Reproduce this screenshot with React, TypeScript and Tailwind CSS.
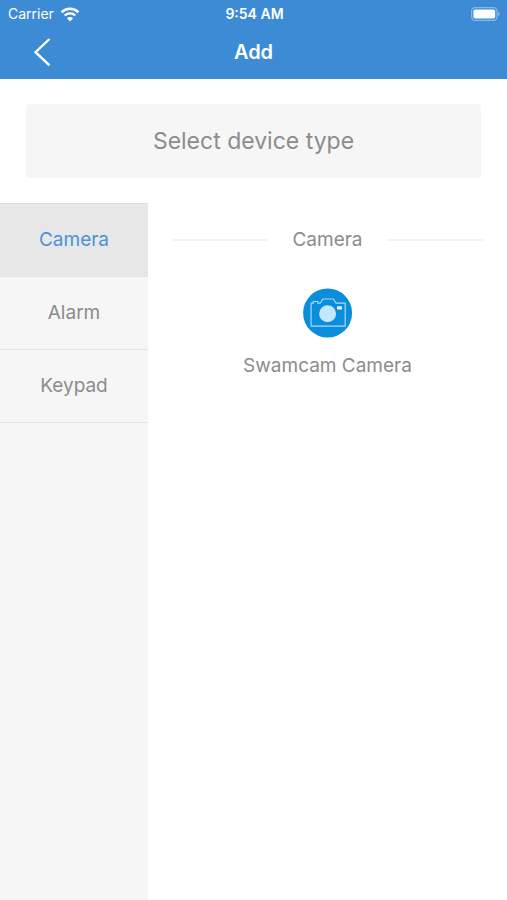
import { useState } from 'react'

interface Device {
  name: string
}

interface Category {
  label: string
  devices: Device[]
}

const categories: Category[] = [
  { label: 'Camera', devices: [{ name: 'Swamcam Camera' }] },
  { label: 'Alarm', devices: [] },
  { label: 'Keypad', devices: [] },
]

function WifiIcon() {
  return (
    <svg width="20" height="15" viewBox="0 0 20 15" fill="none" aria-hidden="true">
      <path d="M1.6 5.2a12 12 0 0 1 16.8 0" stroke="white" strokeWidth="2.7" />
      <path d="M4.7 8.5a7.6 7.6 0 0 1 10.6 0" stroke="white" strokeWidth="2.4" />
      <path d="M10 14.4 6.9 11.3a4.4 4.4 0 0 1 6.2 0z" fill="white" />
    </svg>
  )
}

function BatteryIcon() {
  return (
    <svg width="30" height="14" viewBox="0 0 30 14" fill="none" aria-hidden="true">
      <rect x="0.6" y="0.6" width="25.4" height="12.8" rx="3.6" stroke="white" strokeOpacity="0.4" strokeWidth="1.2" />
      <rect x="2.4" y="2.4" width="21.8" height="9.2" rx="1.8" fill="white" />
      <path d="M27.2 4.8c1.8.7 1.8 3.7 0 4.4z" fill="white" fillOpacity="0.5" />
    </svg>
  )
}

function CameraIcon() {
  return (
    <svg width="50" height="50" viewBox="0 0 50 50" fill="none" aria-hidden="true">
      <circle cx="24.6" cy="25" r="24.5" fill="#0a8ddb" />
      <path
        d="M8.1 15.2h2.1v-1.7h4.6v1.7h2.4l2.6-4.2h10.6l2.6 4.2h9.2v22.9H8.1z"
        stroke="#a9daf8"
        strokeWidth="1.2"
        strokeLinejoin="round"
      />
      <circle cx="24.6" cy="25.8" r="8.5" fill="#c3e7fc" />
      <rect x="34" y="18.2" width="5" height="3.2" rx="0.4" fill="#e6f6ff" />
    </svg>
  )
}

function StatusBar() {
  return (
    <div className="grid h-7 grid-cols-3 items-center pl-2 pr-1.5 text-white">
      <div className="flex items-center gap-1.5 text-sm">
        <span>Carrier</span>
        <WifiIcon />
      </div>
      <span className="text-center text-sm font-semibold">9:54 AM</span>
      <div className="flex justify-end">
        <BatteryIcon />
      </div>
    </div>
  )
}

export default function App() {
  const [selected, setSelected] = useState(0)
  const active = categories[selected]

  return (
    <div className="flex min-h-screen flex-col bg-white font-['Inter','Liberation_Sans',sans-serif] text-[#8c8c8c]">
      <header className="bg-[#3d8bd5]">
        <StatusBar />
        <div className="grid h-[51px] grid-cols-3 items-center pb-1 text-white">
          <button type="button" aria-label="Back" className="ml-8 w-5">
            <svg width="20" height="30" viewBox="0 0 20 30" fill="none" aria-hidden="true">
              <path d="M17.5 2 3.5 15.2l14 13.2" stroke="white" strokeWidth="2.4" />
            </svg>
          </button>
          <h1 className="text-center text-xl font-semibold">Add</h1>
        </div>
      </header>

      <div className="px-[26px] py-[25px]">
        <h2 className="rounded-sm bg-[#f6f6f6] py-5 text-center text-[23px] leading-[34px]">
          Select device type
        </h2>
      </div>

      <div className="flex flex-1">
        <nav className="w-[148px] shrink-0 border-t border-[#dedede] bg-[#f6f6f6]">
          {categories.map((category, i) => (
            <button
              key={category.label}
              type="button"
              aria-pressed={i === selected}
              onClick={() => setSelected(i)}
              className={`block w-full border-b border-[#e3e3e3] py-6 text-[19px] leading-6 ${
                i === selected ? 'bg-[#e7e7e7] text-[#4a92d8]' : ''
              }`}
            >
              {category.label}
            </button>
          ))}
        </nav>

        <main className="flex-1 px-6 pt-[25px]">
          <div className="flex items-center gap-6">
            <div className="h-0.5 flex-1 bg-[#f3f3f3]" />
            <h3 className="text-[19px] leading-6">{active.label}</h3>
            <div className="h-0.5 flex-1 bg-[#f3f3f3]" />
          </div>
          <div className="mt-9 flex flex-col items-center gap-6">
            {active.devices.map((device) => (
              <button key={device.name} type="button" className="flex flex-col items-center gap-4">
                <CameraIcon />
                <span className="text-[19px] leading-6">{device.name}</span>
              </button>
            ))}
          </div>
        </main>
      </div>
    </div>
  )
}
